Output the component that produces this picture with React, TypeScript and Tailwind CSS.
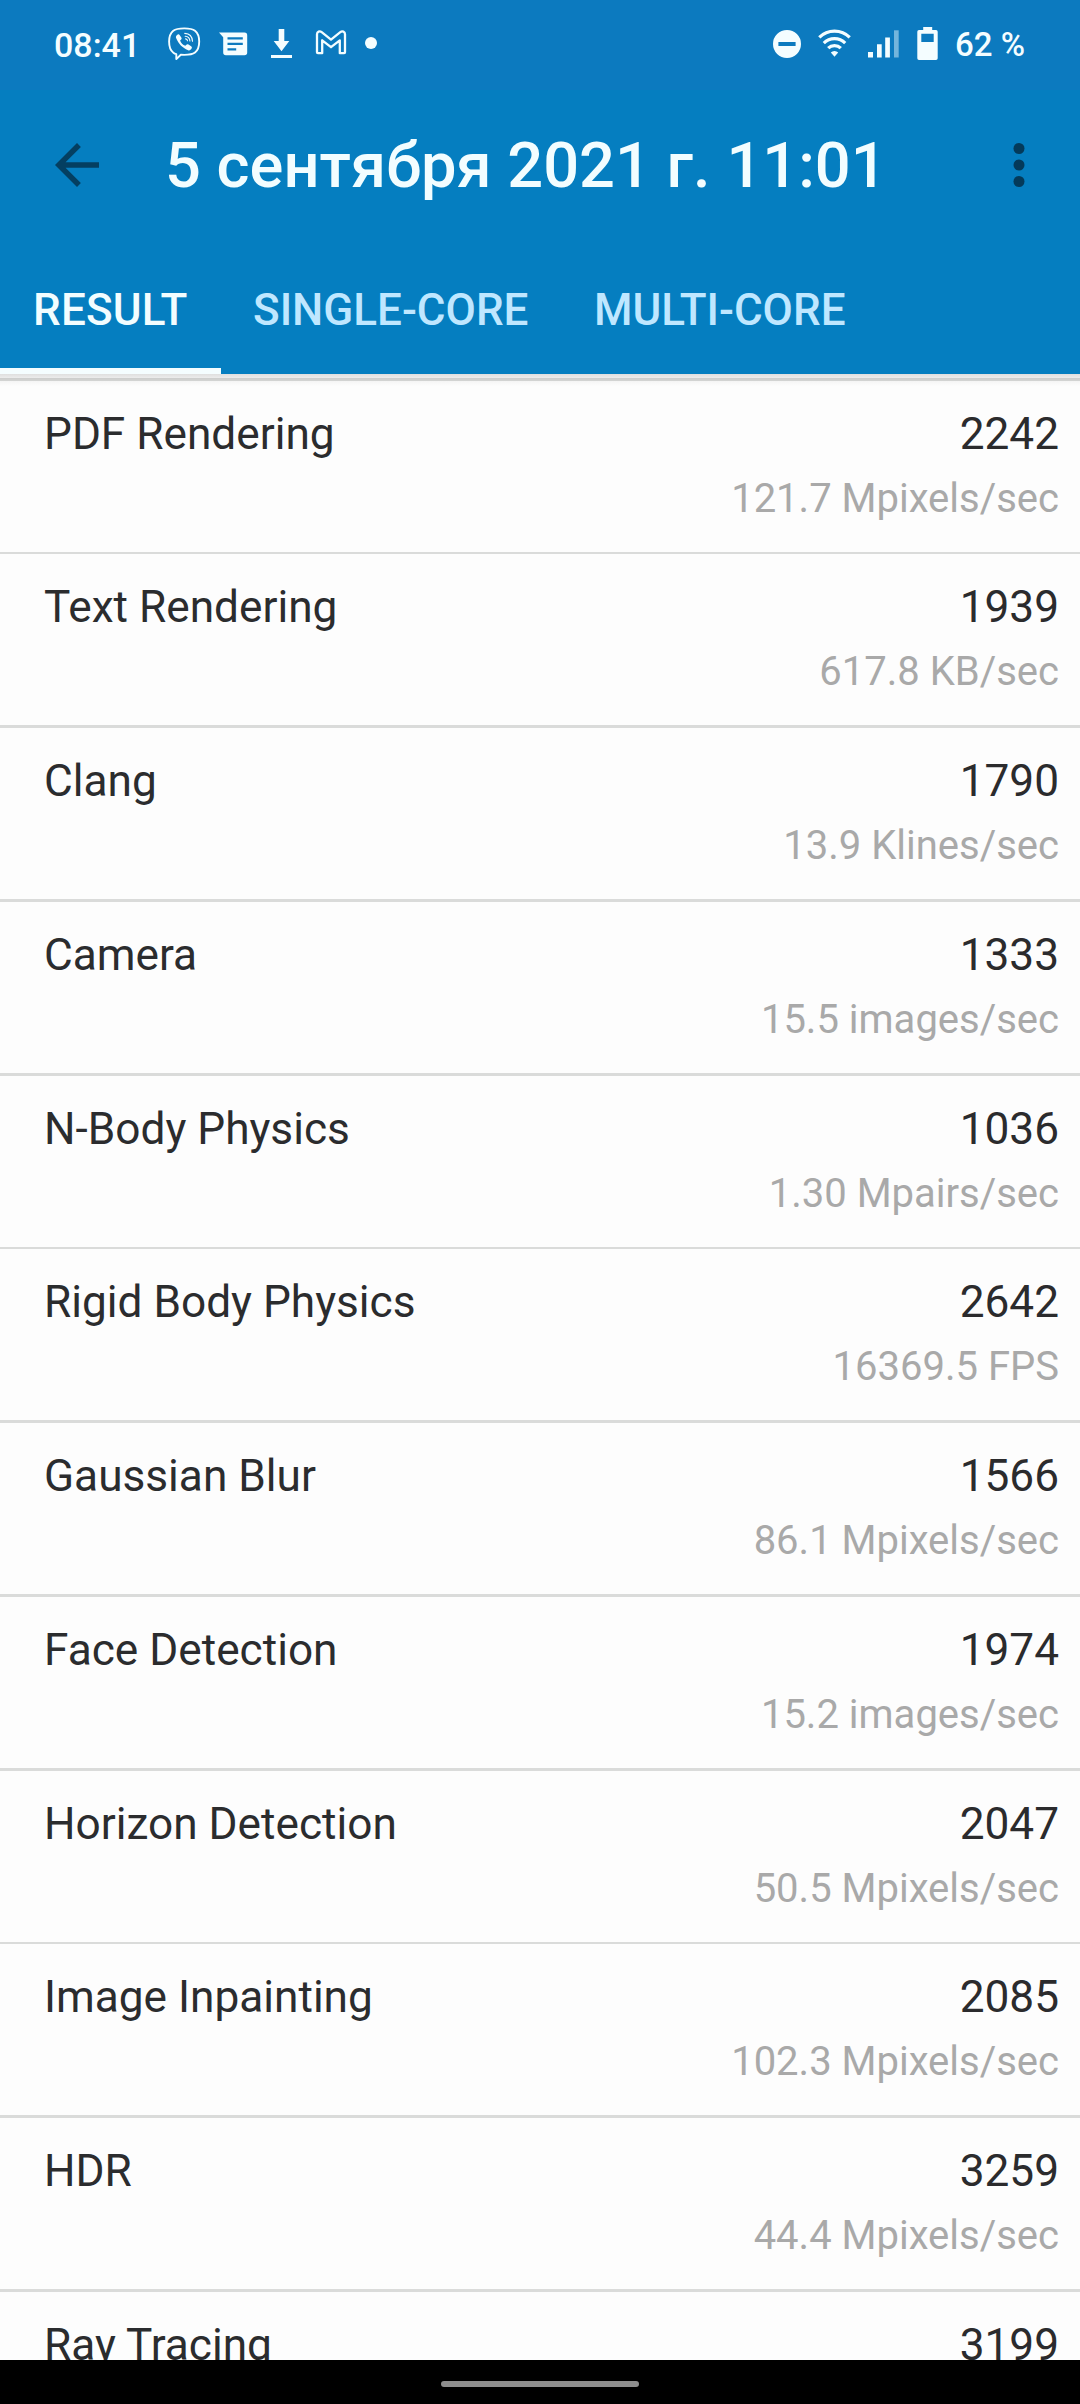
type Row = { name: string; score: string; rate: string };

const rows: Row[] = [
  { name: "PDF Rendering", score: "2242", rate: "121.7 Mpixels/sec" },
  { name: "Text Rendering", score: "1939", rate: "617.8 KB/sec" },
  { name: "Clang", score: "1790", rate: "13.9 Klines/sec" },
  { name: "Camera", score: "1333", rate: "15.5 images/sec" },
  { name: "N-Body Physics", score: "1036", rate: "1.30 Mpairs/sec" },
  { name: "Rigid Body Physics", score: "2642", rate: "16369.5 FPS" },
  { name: "Gaussian Blur", score: "1566", rate: "86.1 Mpixels/sec" },
  { name: "Face Detection", score: "1974", rate: "15.2 images/sec" },
  { name: "Horizon Detection", score: "2047", rate: "50.5 Mpixels/sec" },
  { name: "Image Inpainting", score: "2085", rate: "102.3 Mpixels/sec" },
  { name: "HDR", score: "3259", rate: "44.4 Mpixels/sec" },
  { name: "Ray Tracing", score: "3199", rate: "" },
];

function ViberIcon() {
  return (
    <svg width="34" height="34" viewBox="0 0 34 34" fill="none" stroke="currentColor" strokeLinecap="round" strokeLinejoin="round">
      <path
        d="M17.3 1.4c-4.6 0-8.6.4-11 2.3C3 6.3 2.1 10 2.1 14.6c0 4.7.9 8.8 4.3 11.2.9.7 1.9 1.1 2.9 1.4v4.9l4.5-4.3c1.1.1 2.3.1 3.5.1 4.6 0 8.3-.4 10.7-2.3 3.3-2.5 4.2-6.4 4.2-11s-.9-8.3-4.2-10.9C25.6 1.8 21.9 1.4 17.3 1.4z"
        strokeWidth="1.9"
      />
      <path
        d="M10.7 7.6c-1.3.7-2.2 2.1-1.6 3.5 2.4 5.8 6.2 9.8 12 12.2 1.5.6 2.7-.4 3.5-1.7.6-1 .3-1.7-.5-2.3l-2.6-1.8c-.9-.6-1.7-.4-2.4.5l-.7.8c-2.7-1-4.5-2.8-5.3-5.4l.8-.7c.8-.6 1-1.4.4-2.3l-1.7-2.4c-.5-.7-1.1-.9-1.9-.4z"
        fill="currentColor"
        stroke="none"
      />
      <path d="M17.8 6.4c4.5.2 7.4 3.1 7.7 7.9M18.2 9.2c2.9.2 4.5 1.9 4.7 4.8M18.6 11.9c1.2.1 1.8.7 1.9 1.9" strokeWidth="1.1" />
    </svg>
  );
}

function MessagesIcon() {
  return (
    <svg width="29" height="24" viewBox="0 0 29 24">
      <path
        fillRule="evenodd"
        fill="currentColor"
        d="M0 .5h25.5a2.7 2.7 0 0 1 2.7 2.7v17.3a2.7 2.7 0 0 1-2.7 2.7H6.9a2.7 2.7 0 0 1-2.7-2.7V5.2zM8.5 5.2v2.2h15.3V5.2zM8.5 10.8V13h15.3v-2.2zM8.5 16.3v2.2h8.7v-2.2z"
      />
    </svg>
  );
}

function DownloadIcon() {
  return (
    <svg width="21" height="30" viewBox="0 0 21 30" fill="currentColor">
      <path d="M7.7 0h5.6v12h5L10.5 22.2 2.7 12h5zM0 26h21v3H0z" />
    </svg>
  );
}

function GmailIcon() {
  return (
    <svg width="32" height="25" viewBox="0 0 32 25" fill="none" stroke="currentColor" strokeWidth="2.3" strokeLinejoin="round">
      <path d="M2 22.3V4.3C2 1.6 4.7.7 6.7 2.2L16 9.6l9.3-7.4C27.3.7 30 1.6 30 4.3v18a.9.9 0 0 1-.9.9h-4.3V10.3L16 17.2l-8.8-6.9v12.9H2.9A.9.9 0 0 1 2 22.3z" />
    </svg>
  );
}

function DoNotDisturbIcon() {
  return (
    <svg width="28" height="28" viewBox="0 0 28 28">
      <path fillRule="evenodd" fill="currentColor" d="M14 0a14 14 0 1 1 0 28 14 14 0 0 1 0-28zM5.4 12v4h17.2v-4z" />
    </svg>
  );
}

function WifiIcon() {
  return (
    <svg width="33" height="28" viewBox="0 0 33 28" fill="none" stroke="currentColor" strokeWidth="3.2">
      <path d="M1.3 8.4a21.5 21.5 0 0 1 30.4 0M5.8 14.1a15.1 15.1 0 0 1 21.4 0M10.2 19.2a8.9 8.9 0 0 1 12.6 0" />
      <path d="M16.5 27.7l-3.7-4.2a5.2 5.2 0 0 1 7.4 0z" fill="currentColor" stroke="none" />
    </svg>
  );
}

function SignalIcon() {
  return (
    <svg width="31" height="28" viewBox="0 0 31 28" fill="currentColor">
      <path d="M0 22h5v5.5H0zM9 14.3h4.7v13.2H9zM17.2 7.6h4.7v19.9h-4.7z" />
      <path d="M26 .3h4.7v27.2H26z" opacity=".45" />
    </svg>
  );
}

function BatteryIcon() {
  return (
    <svg width="21" height="33" viewBox="0 0 21 33">
      <path
        fillRule="evenodd"
        fill="currentColor"
        d="M6.2 0h9v3H19a1.7 1.7 0 0 1 1.7 1.7v26.6A1.7 1.7 0 0 1 19 33H2a1.7 1.7 0 0 1-1.7-1.7V4.7A1.7 1.7 0 0 1 2 3h4.2zM4.3 6.7V15h12.4V6.7z"
      />
    </svg>
  );
}

function StatusBar() {
  return (
    <div className="flex h-[90px] shrink-0 items-start bg-[#0c7abf] text-[#f4fdff]">
      <div className="ml-[54px] mt-[25px] w-[113px] text-[34px] leading-[40px] font-medium">08:41</div>
      <div className="mt-[27px]"><ViberIcon /></div>
      <div className="ml-[18px] mt-[32px]"><MessagesIcon /></div>
      <div className="ml-[23px] mt-[29px]"><DownloadIcon /></div>
      <div className="ml-[23px] mt-[30px]"><GmailIcon /></div>
      <div className="ml-[18px] mt-[37px] size-[12px] rounded-full bg-[#f4fdff]" />
      <div className="ml-auto mt-[30px]"><DoNotDisturbIcon /></div>
      <div className="ml-[17px] mt-[29px]"><WifiIcon /></div>
      <div className="ml-[17px] mt-[30px]"><SignalIcon /></div>
      <div className="ml-[18px] mt-[27px]"><BatteryIcon /></div>
      <div className="ml-[17px] mt-[25px] w-[125px] text-[33px] leading-[40px] font-medium">62 %</div>
    </div>
  );
}

function AppBar() {
  return (
    <div className="flex h-[150px] shrink-0 items-center pl-[44px] pr-[28px]">
      <svg width="66" height="66" viewBox="0 0 24 24" fill="#043f61">
        <path d="M20 11H7.83l5.59-5.59L12 4l-8 8 8 8 1.41-1.41L7.83 13H20v-2z" />
      </svg>
      <h1 className="ml-[55px] flex-1 text-[63.2px] leading-[74px] font-medium whitespace-nowrap text-[#f2fdff]">
        5 сентября 2021 г. 11:01
      </h1>
      <svg width="66" height="66" viewBox="0 0 24 24" fill="#043a5a">
        <circle cx="12" cy="6" r="2" />
        <circle cx="12" cy="12" r="2" />
        <circle cx="12" cy="18" r="2" />
      </svg>
    </div>
  );
}

function Tabs() {
  return (
    <div className="flex h-[134px] shrink-0 text-[44px] leading-[52px] font-medium">
      <div className="flex w-[221px] flex-col border-b-[6px] border-[#f4fdff] pt-[44px] pl-[33px] tracking-[0.2px] text-[#f2fdff]">RESULT</div>
      <div className="w-[341px] pt-[44px] pl-[32px] text-[#bfe7ff]">SINGLE-CORE</div>
      <div className="pt-[44px] pl-[32px] text-[#bfe7ff]">MULTI-CORE</div>
    </div>
  );
}

function ResultRow({ row }: { row: Row }) {
  return (
    <li className="h-[173.75px]">
      <div className="h-[2.75px] bg-[#dadbda]" />
      <div className="flex justify-between pt-[27.05px] pr-[21px] pl-[44px]">
        <span className="text-[44.2px] leading-[52px] text-[#2b2c2e]">{row.name}</span>
        <div className="flex flex-col items-end gap-[15px]">
          <span className="text-[44.2px] leading-[52px] text-[#2b2b2d]">{row.score}</span>
          <span className="text-[40px] leading-[47px] text-[#a9a9a9]">{row.rate}</span>
        </div>
      </div>
    </li>
  );
}

export default function App() {
  return (
    <div className="flex h-[2404px] w-[1080px] flex-col overflow-hidden bg-[#fdfdfd] font-['Roboto',sans-serif]">
      <header className="relative flex shrink-0 flex-col bg-[#057ec0]">
        <StatusBar />
        <AppBar />
        <Tabs />
        <div className="absolute top-full left-0 h-[12px] w-full bg-linear-to-b from-black/12 via-black/4 to-transparent" />
      </header>
      <ul className="min-h-0 flex-1 overflow-hidden pt-[3.9px]">
        {rows.map((row) => (
          <ResultRow key={row.name} row={row} />
        ))}
      </ul>
      <div className="flex h-[44px] shrink-0 justify-center bg-black pt-[21px]">
        <div className="h-[6px] w-[198px] rounded-full bg-[#8e8e8e]" />
      </div>
    </div>
  );
}
